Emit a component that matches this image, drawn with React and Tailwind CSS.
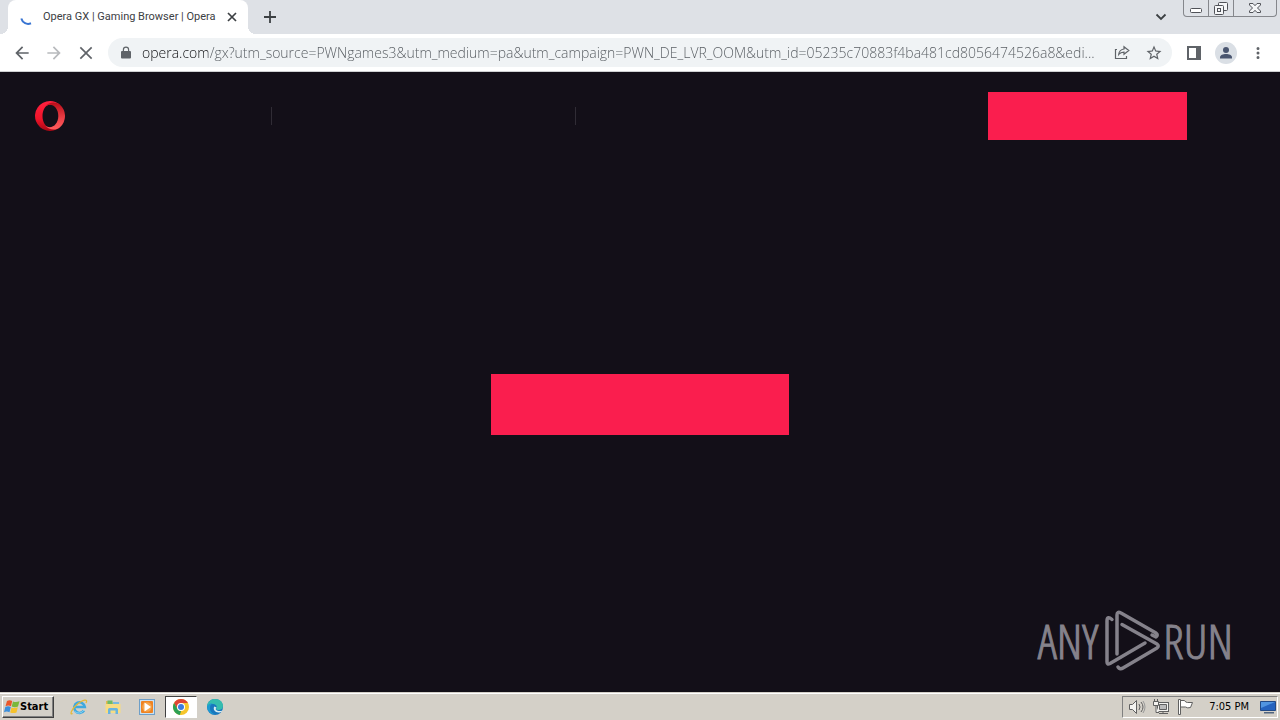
import React from "react";

const url =
  "opera.com/gx?utm_source=PWNgames3&utm_medium=pa&utm_campaign=PWN_DE_LVR_OOM&utm_id=05235c70883f4ba481cd8056474526a8&edi...";

function MaterialIcon({ d, className = "size-5" }) {
  return (
    <svg viewBox="0 0 24 24" className={className} fill="currentColor" aria-hidden="true">
      <path d={d} />
    </svg>
  );
}

function ToolButton({ label, className = "", children }) {
  return (
    <button aria-label={label} className={`flex size-8 shrink-0 items-center justify-center ${className}`}>
      {children}
    </button>
  );
}

function WindowControls() {
  return (
    <div className="flex h-[17px] w-[94px] shrink-0 rounded-b-[4px] border border-t-0 border-[#85878c] bg-[#dfe2e7] text-[#505258]">
      <button aria-label="Minimize" className="flex flex-1 items-center justify-center border-r border-[#85878c]">
        <svg viewBox="0 0 24 16" className="h-4 w-6" fill="#fff" stroke="currentColor" aria-hidden="true">
          <rect x="6.5" y="8.500" width="11" height="4" rx="1" />
        </svg>
      </button>
      <button aria-label="Restore" className="flex w-[25px] items-center justify-center border-r border-[#85878c]">
        <svg viewBox="0 0 24 16" className="h-4 w-6" fill="#f5f6f8" stroke="currentColor" aria-hidden="true">
          <rect x="9.500" y="2.500" width="9" height="8" rx="1" />
          <rect x="5.500" y="5.500" width="9" height="9" rx="1" />
          <rect x="8.500" y="8.500" width="3" height="3" />
        </svg>
      </button>
      <button aria-label="Close" className="flex w-[42px] items-center justify-center">
        <svg viewBox="0 0 24 16" className="h-4 w-6" fill="#f5f6f8" stroke="currentColor" aria-hidden="true">
          <path d="M6.500 3.500h3.500l2 2.200 2-2.200h3.500v1.500L14.500 8l3 3v1.500H14l-2-2.200-2 2.200H6.500V11l3-3-3-3z" />
        </svg>
      </button>
    </div>
  );
}

function TabStrip() {
  return (
    <div className="flex h-[34px] items-start bg-[#dee1e6] pl-2 pr-[3px]">
      <div className="relative flex h-[34px] w-60 shrink-0 items-center rounded-t-lg bg-white pl-3 pr-2 before:absolute before:-left-2 before:bottom-0 before:size-2 before:bg-[radial-gradient(circle_at_0_0,transparent_8px,white_8px)] after:absolute after:-right-2 after:bottom-0 after:size-2 after:bg-[radial-gradient(circle_at_100%_0,transparent_8px,white_8px)]">
        <svg viewBox="0 0 16 16" className="size-4 shrink-0" fill="none" stroke="#3874d2" strokeWidth="2" aria-hidden="true">
          <path d="M1.300 9.500c1.300 4.500 5.500 6.500 9.700 4.800" />
        </svg>
        <span className="ml-[7px] flex-1 overflow-hidden whitespace-nowrap font-['Roboto',sans-serif] text-[11px] leading-4 text-[#3c4043]">
          Opera GX | Gaming Browser | Opera
        </span>
        <button aria-label="Close tab" className="flex size-4 shrink-0 items-center justify-center text-[#3c4043]">
          <svg viewBox="0 0 16 16" className="size-4" stroke="currentColor" strokeWidth="1.700" aria-hidden="true">
            <path d="m4 4 8 8M12 4l-8 8" />
          </svg>
        </button>
      </div>
      <button aria-label="New tab" className="ml-3 mt-[7px] flex size-5 items-center justify-center text-[#3c4043]">
        <svg viewBox="0 0 20 20" className="size-5" stroke="currentColor" strokeWidth="1.800" aria-hidden="true">
          <path d="M10 4v12M4 10h12" />
        </svg>
      </button>
      <div className="flex-1" />
      <button aria-label="Search tabs" className="mr-3 mt-[7px] flex size-5 items-center justify-center text-[#3c4043]">
        <svg viewBox="0 0 20 20" className="size-5" fill="none" stroke="currentColor" strokeWidth="1.800" aria-hidden="true">
          <path d="m5.500 7.500 4.500 4.500 4.500-4.500" />
        </svg>
      </button>
      <WindowControls />
    </div>
  );
}

function Toolbar() {
  return (
    <div className="flex h-[38px] items-center border-b border-[#cfd0d2] bg-white px-1.5 text-[#5f6368]">
      <ToolButton label="Back">
        <MaterialIcon d="M20 11H7.830l5.590-5.590L12 4l-8 8 8 8 1.410-1.410L7.830 13H20v-2z" />
      </ToolButton>
      <ToolButton label="Forward" className="text-[#b8babd]">
        <MaterialIcon d="M12 4l-1.410 1.410L16.170 11H4v2h12.170l-5.580 5.590L12 20l8-8z" />
      </ToolButton>
      <ToolButton label="Stop loading">
        <MaterialIcon d="M19.500 5.900 18.100 4.500 12 10.600 5.900 4.500 4.500 5.900 10.600 12l-6.100 6.100 1.400 1.400L12 13.400l6.100 6.100 1.400-1.400L13.400 12z" />
      </ToolButton>
      <div className="ml-1.5 flex h-[29px] min-w-0 flex-1 items-center rounded-full bg-[#f0f3f5] pl-2.5 pr-0.5">
        <svg viewBox="0 0 16 16" className="size-4 shrink-0" fill="currentColor" aria-hidden="true">
          <path d="M12 6h-.8V4.700a3.200 3.200 0 0 0-6.400 0V6H4a1 1 0 0 0-1 1v5.500a1 1 0 0 0 1 1h8a1 1 0 0 0 1-1V7a1 1 0 0 0-1-1zM6 4.700a2 2 0 0 1 4 0V6H6z" />
        </svg>
        <input
          aria-label="Address and search bar"
          defaultValue={url}
          spellCheck={false}
          className="ml-2 h-6 min-w-0 flex-1 bg-[linear-gradient(90deg,#101114_66px,#54595e_66px)] bg-clip-text font-['Open_Sans','Noto_Sans',sans-serif] text-[14px] font-light leading-6 text-transparent outline-none"
        />
        <ToolButton label="Share this page">
          <svg viewBox="0 0 16 16" className="size-4" fill="none" stroke="currentColor" strokeWidth="1.200" aria-hidden="true">
            <path d="M3 4.500H1.500v9h11V11" />
            <path d="M10 1.700 14.800 5.500 10 9.200V7.200C7.500 7.200 5.900 8 4.700 9.500c.3-3 2.200-5 5.300-5.500z" />
          </svg>
        </ToolButton>
        <ToolButton label="Bookmark this tab">
          <MaterialIcon
            className="size-[18px]"
            d="M22 9.240l-7.190-.62L12 2 9.190 8.630 2 9.240l5.460 4.730L5.820 21 12 17.270 18.180 21l-1.630-7.030zM12 15.400l-3.760 2.270 1-4.280-3.320-2.880 4.380-.38L12 6.100l1.710 4.040 4.380.38-3.320 2.880 1 4.280z"
          />
        </ToolButton>
      </div>
      <ToolButton label="Side panel" className="ml-1.5">
        <svg viewBox="0 0 16 16" className="size-4" aria-hidden="true">
          <path d="M1 1h14v14H1zM3 3v10h7V3z" fill="currentColor" fillRule="evenodd" />
        </svg>
      </ToolButton>
      <ToolButton label="Profile">
        <svg viewBox="0 0 22 22" className="size-[22px]" aria-hidden="true">
          <circle cx="11" cy="11" r="11" fill="#dadfe5" />
          <circle cx="11" cy="8" r="3" fill="#4a5670" />
          <path d="M5 16.500v-1.200C5 13.200 8 12 11 12s6 1.200 6 3.300v1.200z" fill="#4a5670" />
        </svg>
      </ToolButton>
      <ToolButton label="Menu">
        <MaterialIcon className="size-[18px]" d="M12 8a2 2 0 1 0 0-4 2 2 0 0 0 0 4zm0 2a2 2 0 1 0 0 4 2 2 0 0 0 0-4zm0 6a2 2 0 1 0 0 4 2 2 0 0 0 0-4z" />
      </ToolButton>
    </div>
  );
}

function OperaLogo() {
  return (
    <svg viewBox="0 0 30 30" className="size-[30px]" aria-hidden="true">
      <defs>
        <linearGradient id="opera-left" x1="0" y1="0" x2="0" y2="1">
          <stop offset="0" stopColor="#ff2140" />
          <stop offset=".6" stopColor="#ef1429" />
          <stop offset="1" stopColor="#a50714" />
        </linearGradient>
        <linearGradient id="opera-right" x1="0" y1="0" x2="0" y2="1">
          <stop offset="0" stopColor="#b80d18" />
          <stop offset=".6" stopColor="#ed4148" />
          <stop offset="1" stopColor="#ff5c5c" />
        </linearGradient>
      </defs>
      <path d="M15 0a15 15 0 1 0 10 26.200L15.500 26.600C10.500 26.600 7.500 21 7.500 15S10.500 3.400 15.500 3.400L25 3.800A15 15 0 0 0 15 0z" fill="url(#opera-left)" />
      <path d="M10.200 5.500C14 .5 21 .3 25 3.800a15 15 0 0 1 0 22.400c-4 3.500-11 3.300-14.800-1.700C16 29 23.300 24 23.300 15S16 1 10.200 5.500z" fill="url(#opera-right)" />
    </svg>
  );
}

function Watermark() {
  return (
    <div className="absolute bottom-5 right-[47px] flex h-[62px] items-center font-['Open_Sans_Condensed_Light','Open_Sans_Condensed',sans-serif] text-[48px] font-normal leading-[62px] text-[#85828b] [-webkit-text-stroke:1px_#85828b]">
      <span>ANY</span>
      <svg viewBox="0 0 56 62" className="ml-[7px] mr-0.5 h-[62px] w-14" fill="none" stroke="currentColor" strokeWidth="3.500" strokeLinejoin="round" strokeLinecap="round" aria-hidden="true">
        <path d="M7 9.500C4 7 2 7 2 11v41q0 3 3 1.500L40 33" />
        <path d="M12 44V5q0-4 4-2l35 20q2.500 2 0 4l-4-2" />
        <path d="M17 14.500 52 34q2.500 2 0 4L18 58q-3 2-5-1" />
      </svg>
      <span>RUN</span>
    </div>
  );
}

function PageContent() {
  return (
    <main className="relative flex flex-1 flex-col bg-[#130f18]">
      <header className="flex items-center pl-[35px] pr-[93px] pt-5">
        <a href="#home" aria-label="Opera">
          <OperaLogo />
        </a>
        <nav className="flex h-12 flex-1 items-center" aria-label="Main">
          <div className="ml-[206px] h-[18px] w-px bg-[#302c35]" />
          <div className="ml-[303px] h-[18px] w-px bg-[#302c35]" />
        </nav>
        <button aria-label="Download" className="h-12 w-[199px] bg-[#fa1e4e]" />
      </header>
      <section className="flex flex-1 items-start justify-center pt-[234px]">
        <button aria-label="Download Opera GX" className="h-[61px] w-[298px] bg-[#fa1e4e]" />
      </section>
      <Watermark />
    </main>
  );
}

function WindowsFlag() {
  return (
    <svg viewBox="0 0 16 16" className="size-4 shrink-0" aria-hidden="true">
      <path d="M3 2c2-1 3.500-.8 5.200 0L7 7.200c-1.800-.8-3.500-.8-5.500 0z" fill="#e9562a" />
      <path d="M9 2.500c2 .8 4 .7 6.500-.3L14 7.500c-2 1-4.200 1-6.300.1z" fill="#7ab83b" />
      <path d="M1.300 8c2-.9 3.700-.8 5.500 0L5.500 13.200c-1.800-.8-3.500-.9-5.500 0z" fill="#3b8edb" />
      <path d="M7.500 8.400c2 .9 4.200.8 6.300-.2l-1.300 5.200c-2 1-4.200.9-6.300.1z" fill="#f6c22d" />
    </svg>
  );
}

function ExplorerIcon() {
  return (
    <svg viewBox="0 0 18 18" className="size-[18px]" fill="none" aria-hidden="true">
      <path d="M14 12.500a5.300 5.300 0 1 1 .8-3.500H5" stroke="#3fa9df" strokeWidth="2.600" />
      <path d="M14 12a6 6 0 0 1-9.500 1.300" stroke="#8ad3f2" strokeWidth="1" />
      <path d="M2.600 15.500C-.5 17.500 1 11.500 7 6.500S18.500.5 16 5" stroke="#e5b936" strokeWidth="1.300" />
    </svg>
  );
}

function FolderIcon() {
  return (
    <svg viewBox="0 0 18 18" className="size-[18px]" aria-hidden="true">
      <path d="M2 3h5l1 1.500h7V15H2z" fill="#e4b94e" />
      <path d="M3.500 2.500h5v4h-5z" fill="#6cbb67" />
      <path d="M9 4h6v4H9z" fill="#76b9df" />
      <path d="M1.500 6h15v9h-15z" fill="#f7dc83" />
      <path d="M4 16v-4.500q0-1.500 1.500-1.500h7q1.500 0 1.500 1.500V16h-2.500v-3.500h-5V16z" fill="#69b4df" />
    </svg>
  );
}

function MediaIcon() {
  return (
    <svg viewBox="0 0 18 18" className="size-[18px]" aria-hidden="true">
      <rect x="1.500" y="1.500" width="15" height="15" fill="#c9e1f3" stroke="#6e9fc8" />
      <rect x="3" y="3" width="12" height="12" rx="1" fill="#ef8322" />
      <circle cx="9" cy="9" r="4.800" fill="#f5a64d" />
      <path d="M6.500 4.500v9l6.500-4.500z" fill="#fff" />
    </svg>
  );
}

function ChromeIcon() {
  return (
    <svg viewBox="0 0 18 18" className="size-[18px]" aria-hidden="true">
      <circle cx="9" cy="9" r="8" fill="#f6c52a" />
      <path d="M2.070 5A8 8 0 0 1 15.930 5H9l-3.500 6z" fill="#df4535" />
      <path d="M2.070 5 5.540 11A4 4 0 0 0 9 13l-1 4A8 8 0 0 1 2.070 5z" fill="#2ca054" />
      <path d="m12.460 11-3.500 6H8l2-4z" fill="#f6c52a" />
      <circle cx="9" cy="9" r="4" fill="#fff" />
      <circle cx="9" cy="9" r="3" fill="#3c7ce0" />
    </svg>
  );
}

function EdgeIcon() {
  return (
    <svg viewBox="0 0 18 18" className="size-[18px]" aria-hidden="true">
      <circle cx="9" cy="9" r="8" fill="#1977be" />
      <path d="M1 8.500C1.500 3.500 5 1 9 1c5 0 8 3.400 8 6.800 0 3-2 4.200-4.500 4.200-2 0-3-.7-2-2 1-2-1-4-4-4-2.300 0-4.300 1-5.500 2.500z" fill="#35bcae" />
      <path d="M1 8.500C2.500 5.800 5 5 7 5c-2 .8-3.200 3-3 5.500.2 3 2.500 5.500 6 6A8 8 0 0 1 1 8.500z" fill="#1d9bd2" />
      <path d="M8.300 8.500c-1.700 2.800.7 6 4.200 6 1.400 0 2.300-.3 3.200-.8l.8-1.200c-1 .5-2.600.8-4 .5-2.500-.4-3.500-2-2-3.500z" fill="#d8edf2" />
    </svg>
  );
}

function TaskButton({ label, active = false, children }) {
  return (
    <button
      aria-label={label}
      className={
        active
          ? "flex h-[22px] w-8 items-center justify-center border border-b-white border-l-[#404040] border-r-white border-t-[#404040] bg-white"
          : "flex h-[22px] w-8 items-center justify-center"
      }
    >
      {children}
    </button>
  );
}

function Taskbar() {
  return (
    <footer className="flex h-7 shrink-0 items-center border-t border-[#d4d0c8] bg-[#d4d0c8] px-0.5 font-['DejaVu_Sans_Condensed','DejaVu_Sans',sans-serif] text-black shadow-[inset_0_1px_0_white]">
      <button className="flex h-[22px] w-[52px] shrink-0 items-center border border-b-[#404040] border-l-white border-r-[#404040] border-t-white pl-px font-['DejaVu_Sans_Condensed','DejaVu_Sans',sans-serif] text-[11px] font-bold leading-4 shadow-[inset_-1px_-1px_0_#808080]">
        <WindowsFlag />
        Start
      </button>
      <div className="ml-[9px] flex gap-0.5">
        <TaskButton label="Internet Explorer"><ExplorerIcon /></TaskButton>
        <TaskButton label="File Explorer"><FolderIcon /></TaskButton>
        <TaskButton label="Media Player"><MediaIcon /></TaskButton>
        <TaskButton label="Google Chrome" active><ChromeIcon /></TaskButton>
        <TaskButton label="Microsoft Edge"><EdgeIcon /></TaskButton>
      </div>
      <div className="flex-1" />
      <div className="flex h-[22px] items-center border border-b-white border-l-[#808080] border-r-white border-t-[#808080] pl-[5px] text-[#606060]">
        <svg viewBox="0 0 18 18" className="size-[18px]" fill="#f4f3f0" stroke="currentColor" aria-label="Volume" role="img">
          <path d="M1.500 6.500h3l4-4v13l-4-4h-3z" />
          <path d="M11 6q2 3 0 6M13 4q4 5 0 10" fill="none" />
          <path d="M15 3q4 6 0 12" fill="none" stroke="#999" />
        </svg>
        <svg viewBox="0 0 18 18" className="ml-1.5 size-[18px]" fill="#f4f3f0" stroke="currentColor" aria-label="Network" role="img">
          <rect x="5.500" y="4.500" width="11" height="9" />
          <path d="M7.500 6.500h7v5h-7z" fill="#bbb" />
          <path d="M7 15.500h9M11 13.500v2" />
          <path d="M1.500 3.500h5v4h-5zM2.500 1v2.500M5.500 1v2.500M4 7.500v7h3" />
        </svg>
        <svg viewBox="0 0 18 18" className="ml-1.5 size-[18px]" fill="#fff" stroke="currentColor" aria-label="Action Center" role="img">
          <path d="M4.500 2.500h4q1 2 3 2h5l-2 5q-3 1-5-.500H4.500z" />
          <path d="M2.500 1.500h2v15h-2z" />
        </svg>
        <time className="ml-[15px] text-[11px] leading-4 text-black">7:05 PM</time>
        <svg viewBox="0 0 18 18" className="ml-2.5 size-[18px]" aria-label="Show desktop" role="img">
          <path d="M1.500 3.500h15v9h-15z" fill="#2563be" stroke="#224a86" />
          <path d="M2 4h14L2 10z" fill="#5195e0" />
          <path d="M5 14h10v1.500H5z" fill="#50647e" />
        </svg>
      </div>
    </footer>
  );
}

export default function App() {
  return (
    <div className="flex min-h-screen flex-col">
      <TabStrip />
      <Toolbar />
      <PageContent />
      <Taskbar />
    </div>
  );
}
